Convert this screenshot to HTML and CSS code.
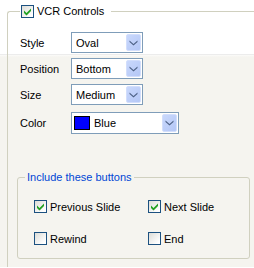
FILE: index.html
```html
<!DOCTYPE html>
<html lang="en">
<head>
    <meta charset="UTF-8">
    <meta name="viewport" content="width=device-width, initial-scale=1.0">
    <title>VCR Controls</title>
    <link rel="stylesheet" href="styles.css">
</head>
<body>
    <fieldset class="vcr">
        <legend class="vcr-title">
            <span class="check"><svg width="11" height="11" viewBox="0 0 11 11"><polygon points="2,4.5 4.5,7 9,2.5 9,5 4.5,9.5 2,7" fill="#21a121"/></svg></span>
            VCR Controls
        </legend>

        <div class="options">
            <div class="option-row">
                <span class="opt-label">Style</span>
                <div class="combo">
                    <span class="combo-text">Oval</span>
                    <span class="drop"><svg width="9" height="6" viewBox="0 0 9 6"><polygon points="0.5,0.5 4.5,4 8.5,0.5 8.5,2 4.5,5.5 0.5,2" fill="#4d6185"/></svg></span>
                </div>
            </div>
            <div class="option-row">
                <span class="opt-label">Position</span>
                <div class="combo">
                    <span class="combo-text">Bottom</span>
                    <span class="drop"><svg width="9" height="6" viewBox="0 0 9 6"><polygon points="0.5,0.5 4.5,4 8.5,0.5 8.5,2 4.5,5.5 0.5,2" fill="#4d6185"/></svg></span>
                </div>
            </div>
            <div class="option-row">
                <span class="opt-label">Size</span>
                <div class="combo">
                    <span class="combo-text">Medium</span>
                    <span class="drop"><svg width="9" height="6" viewBox="0 0 9 6"><polygon points="0.5,0.5 4.5,4 8.5,0.5 8.5,2 4.5,5.5 0.5,2" fill="#4d6185"/></svg></span>
                </div>
            </div>
            <div class="option-row option-color">
                <span class="opt-label">Color</span>
                <div class="combo combo-wide">
                    <span class="swatch"></span>
                    <span class="combo-text">Blue</span>
                    <span class="drop"><svg width="9" height="6" viewBox="0 0 9 6"><polygon points="0.5,0.5 4.5,4 8.5,0.5 8.5,2 4.5,5.5 0.5,2" fill="#4d6185"/></svg></span>
                </div>
            </div>
        </div>

        <fieldset class="buttons">
            <legend class="buttons-title">Include these buttons</legend>
            <div class="button-list">
                <label class="item">
                    <span class="check"><svg width="11" height="11" viewBox="0 0 11 11"><polygon points="2,4.5 4.5,7 9,2.5 9,5 4.5,9.5 2,7" fill="#21a121"/></svg></span>
                    Previous Slide
                </label>
                <label class="item">
                    <span class="check"><svg width="11" height="11" viewBox="0 0 11 11"><polygon points="2,4.5 4.5,7 9,2.5 9,5 4.5,9.5 2,7" fill="#21a121"/></svg></span>
                    Next Slide
                </label>
                <label class="item">
                    <span class="check"></span>
                    Rewind
                </label>
                <label class="item">
                    <span class="check"></span>
                    End
                </label>
            </div>
        </fieldset>
    </fieldset>
</body>
</html>
```

FILE: styles.css
```css
body {
    margin: 0;
    font-family: "Liberation Sans", Arial, sans-serif;
    font-size: 11px;
    color: #000;
    background: linear-gradient(#fff 54px, #ececec 54px, #ececec 55px, #fbfbf9 55px, #f5f4ef 57px);
}
.vcr {
    margin: 5px 0 0 7px;
    padding: 0 0 8px 9px;
    border: 1px solid #d0d0bf;
    border-right: none;
    border-bottom: none;
    border-top-left-radius: 3px;
}
.vcr-title {
    display: flex;
    align-items: center;
    gap: 3px;
    height: 13px;
    line-height: 13px;
    margin-left: 3px;
    padding: 0 7px 0 1px;
}
.check {
    width: 13px;
    height: 13px;
    box-sizing: border-box;
    border: 1px solid #1c5180;
    background: linear-gradient(135deg, #dcdcd7, #fff 85%);
    display: inline-flex;
    flex-shrink: 0;
}
.options {
    margin-top: 14px;
}
.option-row {
    display: flex;
    align-items: center;
    height: 21px;
}
.option-row + .option-row {
    margin-top: 5px;
}
.option-row.option-color {
    height: 22px;
    margin-top: 7px;
}
.opt-label {
    width: 51px;
    padding-left: 3px;
}
.combo {
    width: 72px;
    height: 100%;
    box-sizing: border-box;
    border: 1px solid #7f9db9;
    background: #fff;
    display: flex;
    align-items: center;
    padding-left: 4px;
}
.combo-wide {
    width: 108px;
    padding-left: 2px;
}
.combo-text {
    flex: 1;
}
.swatch {
    width: 16px;
    height: 14px;
    box-sizing: border-box;
    border: 1px solid #000;
    background: #0000ff;
    margin-right: 4px;
}
.drop {
    align-self: stretch;
    width: 15px;
    margin: 1px;
    box-sizing: border-box;
    border: 1px solid #d2defc;
    border-radius: 2px;
    background: linear-gradient(135deg, #c9d8fc, #b4c7f6);
    display: flex;
    align-items: center;
    justify-content: center;
}
.buttons {
    margin: 37px 4px 0 0;
    padding: 0 0 13px 7px;
    border: 1px solid #d0d0bf;
    border-radius: 3px;
}
.buttons-title {
    color: #0046d5;
    padding: 0 2px;
    line-height: 13px;
}
.button-list {
    display: grid;
    grid-template-columns: 114px auto;
    row-gap: 19px;
    margin: 16px 0 0 9px;
}
.item {
    display: flex;
    align-items: center;
    gap: 3px;
    height: 13px;
}
```
